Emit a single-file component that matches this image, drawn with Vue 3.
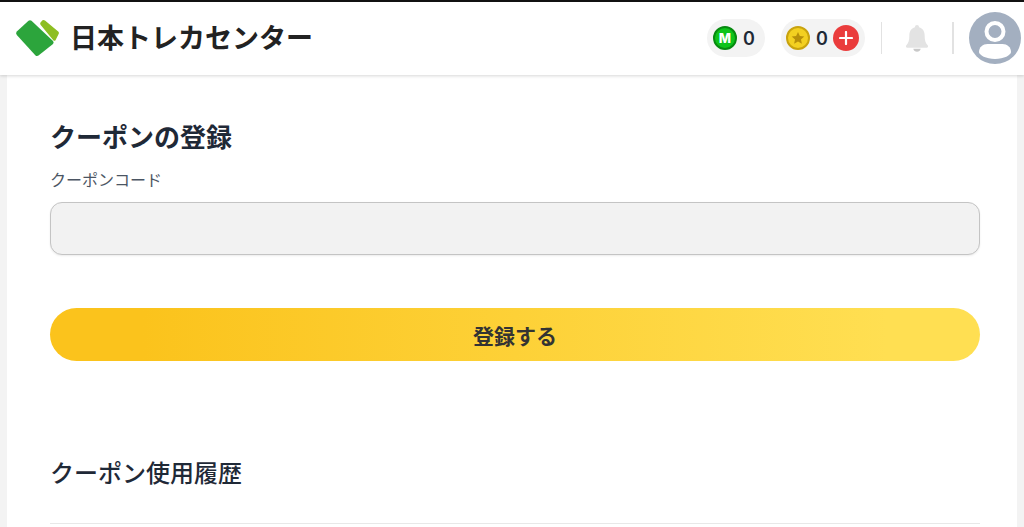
<template>
  <div class="page">
    <header class="site-header">
      <div class="brand">
        <svg class="brand-mark" width="46" height="40" viewBox="15 18 46 40">
          <path d="M16.800 31.500 L28.500 20.800 Q30 19.600 31.500 20.800 L53 41 Q54.300 42.500 53 44 L38.500 55.500 Q37 56.500 35.500 55.400 L16.800 35 Q15.300 33.200 16.800 31.500 Z" fill="#2ca53c" />
          <path d="M40.500 22.500 L42.500 20.300 Q43.700 19.500 45 20.500 L58.500 31.800 Q59.500 33 58.500 34.300 L55.500 40.300 Q54.500 41.300 53.300 40.300 L40.500 24.800 Q39.800 23.600 40.500 22.500 Z" fill="#8dbe22" />
        </svg>
        <span class="brand-name">日本トレカセンター</span>
      </div>
      <div class="header-right">
        <div class="pill pill-m">
          <span class="coin coin-m">M</span>
          <span class="count">0</span>
        </div>
        <div class="pill pill-star">
          <span class="coin coin-star">
            <svg width="14" height="14" viewBox="0 0 24 24"><path d="M12 1.500l3.200 7 7.600.8-5.700 5.100 1.600 7.500L12 18.100l-6.700 3.800 1.600-7.500L1.200 9.300l7.600-.8z" fill="#b8900a" /></svg>
          </span>
          <span class="count">0</span>
          <span class="plus">
            <svg width="14" height="14" viewBox="0 0 14 14"><path d="M7 1v12M1 7h12" stroke="#fff" stroke-width="2.200" stroke-linecap="round" /></svg>
          </span>
        </div>
        <span class="divider"></span>
        <svg class="bell" width="24" height="29" viewBox="0 0 26 31">
          <path d="M13 1c-1.300 0-2.200 1-2.200 2.300C6.600 4.500 4.700 8 4.700 12.500c0 5-1 8-3.200 10.200-1 1-.4 2.800 1.200 2.800h20.600c1.600 0 2.200-1.800 1.200-2.800-2.200-2.200-3.200-5.200-3.200-10.200 0-4.500-1.900-8-6.100-9.200C15.200 2 14.300 1 13 1z" fill="#e3e3e3" />
          <path d="M9 26.500h8c-.4 2-2 3.300-4 3.300s-3.600-1.300-4-3.300z" fill="#c9c9c9" />
        </svg>
        <span class="divider"></span>
        <svg class="avatar" width="52" height="52" viewBox="0 0 52 52">
          <circle cx="26" cy="26" r="26" fill="#a3afc0" />
          <circle cx="26" cy="19.500" r="8.500" fill="none" stroke="#fff" stroke-width="4" />
          <path d="M10 40c0-5 4-8 8.500-8h15c4.500 0 8.500 3 8.500 8 0 3-7 7-16 7s-16-4-16-7z" fill="#fff" />
        </svg>
      </div>
    </header>

    <main class="content">
      <h2 class="title">クーポンの登録</h2>
      <label class="field-label">クーポンコード</label>
      <input class="code-input" type="text" />
      <button class="submit">登録する</button>
      <h2 class="history-title">クーポン使用履歴</h2>
      <div class="rule"></div>
    </main>
  </div>
</template>

<script setup>
</script>

<style>
html, body {
  margin: 0;
  overflow: hidden;
  background: #f3f3f3;
}
</style>

<style scoped>
.page {
  height: 527px;
  overflow: hidden;
  font-family: "Inter", "Noto Sans CJK JP", sans-serif;
  color: #1f2937;
}

.site-header {
  height: 72px;
  border-top: 2px solid #111;
  background: #fff;
  box-shadow: 0 1px 3px rgba(0, 0, 0, 0.16);
  display: flex;
  align-items: center;
  justify-content: space-between;
  padding: 0 0 1px 15px;
  position: relative;
}

.brand {
  display: flex;
  align-items: center;
  gap: 9px;
}

.brand-name {
  font-family: "Noto Sans CJK JP", sans-serif;
  font-size: 27px;
  font-weight: 700;
  color: #222;
  line-height: 1;
  margin-bottom: 3px;
}

.header-right {
  display: flex;
  align-items: center;
}

.pill {
  height: 38px;
  border-radius: 19px;
  background: #f3f3f3;
  display: flex;
  align-items: center;
  box-sizing: border-box;
}

.pill-m {
  width: 58px;
  padding-left: 6px;
  margin-right: 16px;
}

.pill-star {
  width: 84px;
  padding-left: 5px;
}

.coin {
  width: 24px;
  height: 24px;
  border-radius: 50%;
  box-sizing: border-box;
  display: flex;
  align-items: center;
  justify-content: center;
  flex-shrink: 0;
}

.coin-m {
  background: #0ec41a;
  border: 2px solid #078a10;
  color: #fff;
  font-size: 13px;
  font-weight: 800;
}

.coin-star {
  background: #f3d021;
  border: 2px solid #c9a30e;
}

.count {
  font-size: 18px;
  font-weight: 600;
  margin-left: 6px;
  color: #1f2937;
}

.plus {
  width: 26px;
  height: 26px;
  border-radius: 50%;
  background: #ea3c3c;
  margin-left: 5px;
  display: flex;
  align-items: center;
  justify-content: center;
}

.divider {
  width: 1.500px;
  height: 32px;
  background: #e2e2e2;
}

.pill-star + .divider {
  margin-left: 15.500px;
}

.bell {
  margin: 0 23px;
}

.avatar {
  margin-left: 15.500px;
  margin-right: 3px;
}

.content {
  margin: 0 7px;
  background: #fff;
  height: 452px;
  padding: 45px 37px 0 43px;
  box-sizing: border-box;
}

.title {
  margin: 0;
  font-family: "Noto Sans CJK JP", sans-serif;
  font-size: 26px;
  font-weight: 700;
  line-height: 32px;
  color: #1f2937;
}

.field-label {
  display: block;
  margin-top: 16px;
  font-family: "Noto Sans CJK JP", sans-serif;
  font-size: 16px;
  line-height: 22px;
  color: #4b5563;
}

.code-input {
  display: block;
  width: 100%;
  height: 53px;
  margin-top: 12px;
  box-sizing: border-box;
  background: #f2f2f2;
  border: 1px solid #c4c4c4;
  border-radius: 12px;
  box-shadow: 0 1px 2px rgba(0, 0, 0, 0.08);
  outline: none;
}

.submit {
  display: block;
  width: 100%;
  height: 53px;
  margin-top: 53px;
  border: none;
  border-radius: 27px;
  background: linear-gradient(90deg, #fbc31c 10%, #ffdf52 90%);
  font-family: "Noto Sans CJK JP", sans-serif;
  font-size: 21px;
  font-weight: 700;
  color: #333;
}

.history-title {
  margin: 95px 0 0;
  font-family: "Noto Sans CJK JP", sans-serif;
  font-size: 24px;
  font-weight: 500;
  line-height: 32px;
  color: #1f2937;
}

.rule {
  height: 1px;
  background: #e8e8e8;
  margin-top: 35px;
}
</style>
